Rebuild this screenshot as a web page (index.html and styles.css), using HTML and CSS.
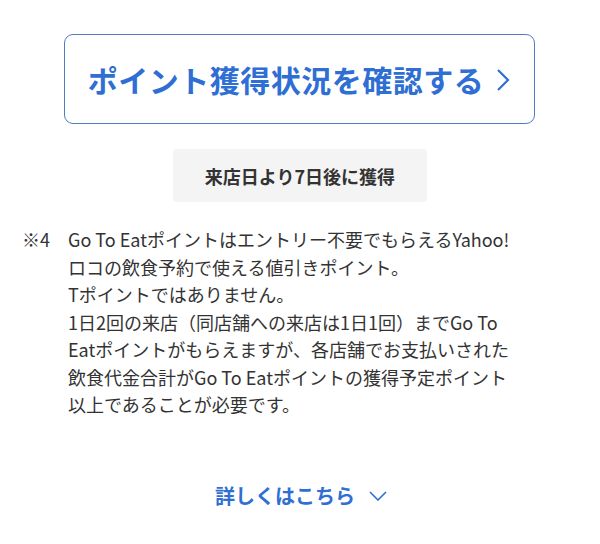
FILE: index.html
```html
<!DOCTYPE html>
<html lang="ja">
<head>
  <meta charset="utf-8">
  <title>ポイント獲得状況</title>
  <link rel="stylesheet" href="styles.css">
</head>
<body>

<div class="point-section">
  <a class="status-button" href="#">
    <span>ポイント獲得状況を確認する</span>
    <svg class="chevron-right" width="14" height="24" viewBox="0 0 14 24"><path d="M2 2 L12 12 L2 22" fill="none" stroke="currentColor" stroke-width="2.2"/></svg>
  </a>

  <div class="timing-box">来店日より7日後に獲得</div>

  <div class="note">
    <div class="note-mark">※4</div>
    <p class="note-text">
      Go To Eatポイントはエントリー不要でもらえるYahoo!<br>
      ロコの飲食予約で使える値引きポイント。<br>
      Tポイントではありません。<br>
      1日2回の来店（同店舗への来店は1日1回）までGo To<br>
      Eatポイントがもらえますが、各店舗でお支払いされた<br>
      飲食代金合計がGo To Eatポイントの獲得予定ポイント<br>
      以上であることが必要です。
    </p>
  </div>

  <a class="more-link" href="#">
    詳しくはこちら
    <svg class="chevron-down" width="18" height="10" viewBox="0 0 18 10"><path d="M1 1 L9 9 L17 1" fill="none" stroke="currentColor" stroke-width="1.6"/></svg>
  </a>
</div>

</body>
</html>
```

FILE: styles.css
```css
body {
  margin: 0;
  background-color: #fff;
  font-family: "Noto Sans CJK JP", "Noto Sans", sans-serif;
  color: #333;
}

.point-section {
  display: flex;
  flex-direction: column;
  align-items: center;
  padding-top: 34px;
}

/* big outlined button */
.status-button {
  box-sizing: border-box;
  width: 471px;
  height: 90px;
  margin-left: -2px;
  display: flex;
  align-items: center;
  justify-content: center;
  gap: 12px;
  border: 1px solid #4f7cc2;
  border-radius: 9px;
  color: #2f6fd4;
  font-size: 30px;
  font-weight: bold;
  text-decoration: none;
  letter-spacing: 0.5px;
}

.chevron-right {
  margin-top: 2px;
}

/* grey label */
.timing-box {
  margin-top: 25px;
  width: 254px;
  height: 53px;
  display: flex;
  align-items: center;
  justify-content: center;
  background-color: #f4f4f4;
  border-radius: 4px;
  font-size: 18px;
  font-weight: bold;
  color: #333;
}

/* footnote */
.note {
  align-self: stretch;
  display: flex;
  margin-top: 24px;
  padding-left: 22px;
  font-size: 18px;
  line-height: 27.5px;
}

.note-mark {
  width: 46px;
  flex-shrink: 0;
}

.note-text {
  margin: 0;
  white-space: nowrap;
}

.more-link {
  margin-top: 63px;
  margin-left: 2px;
  display: flex;
  align-items: center;
  gap: 14px;
  color: #2f6fd4;
  font-size: 20px;
  font-weight: bold;
  line-height: 28px;
  text-decoration: none;
}
```
